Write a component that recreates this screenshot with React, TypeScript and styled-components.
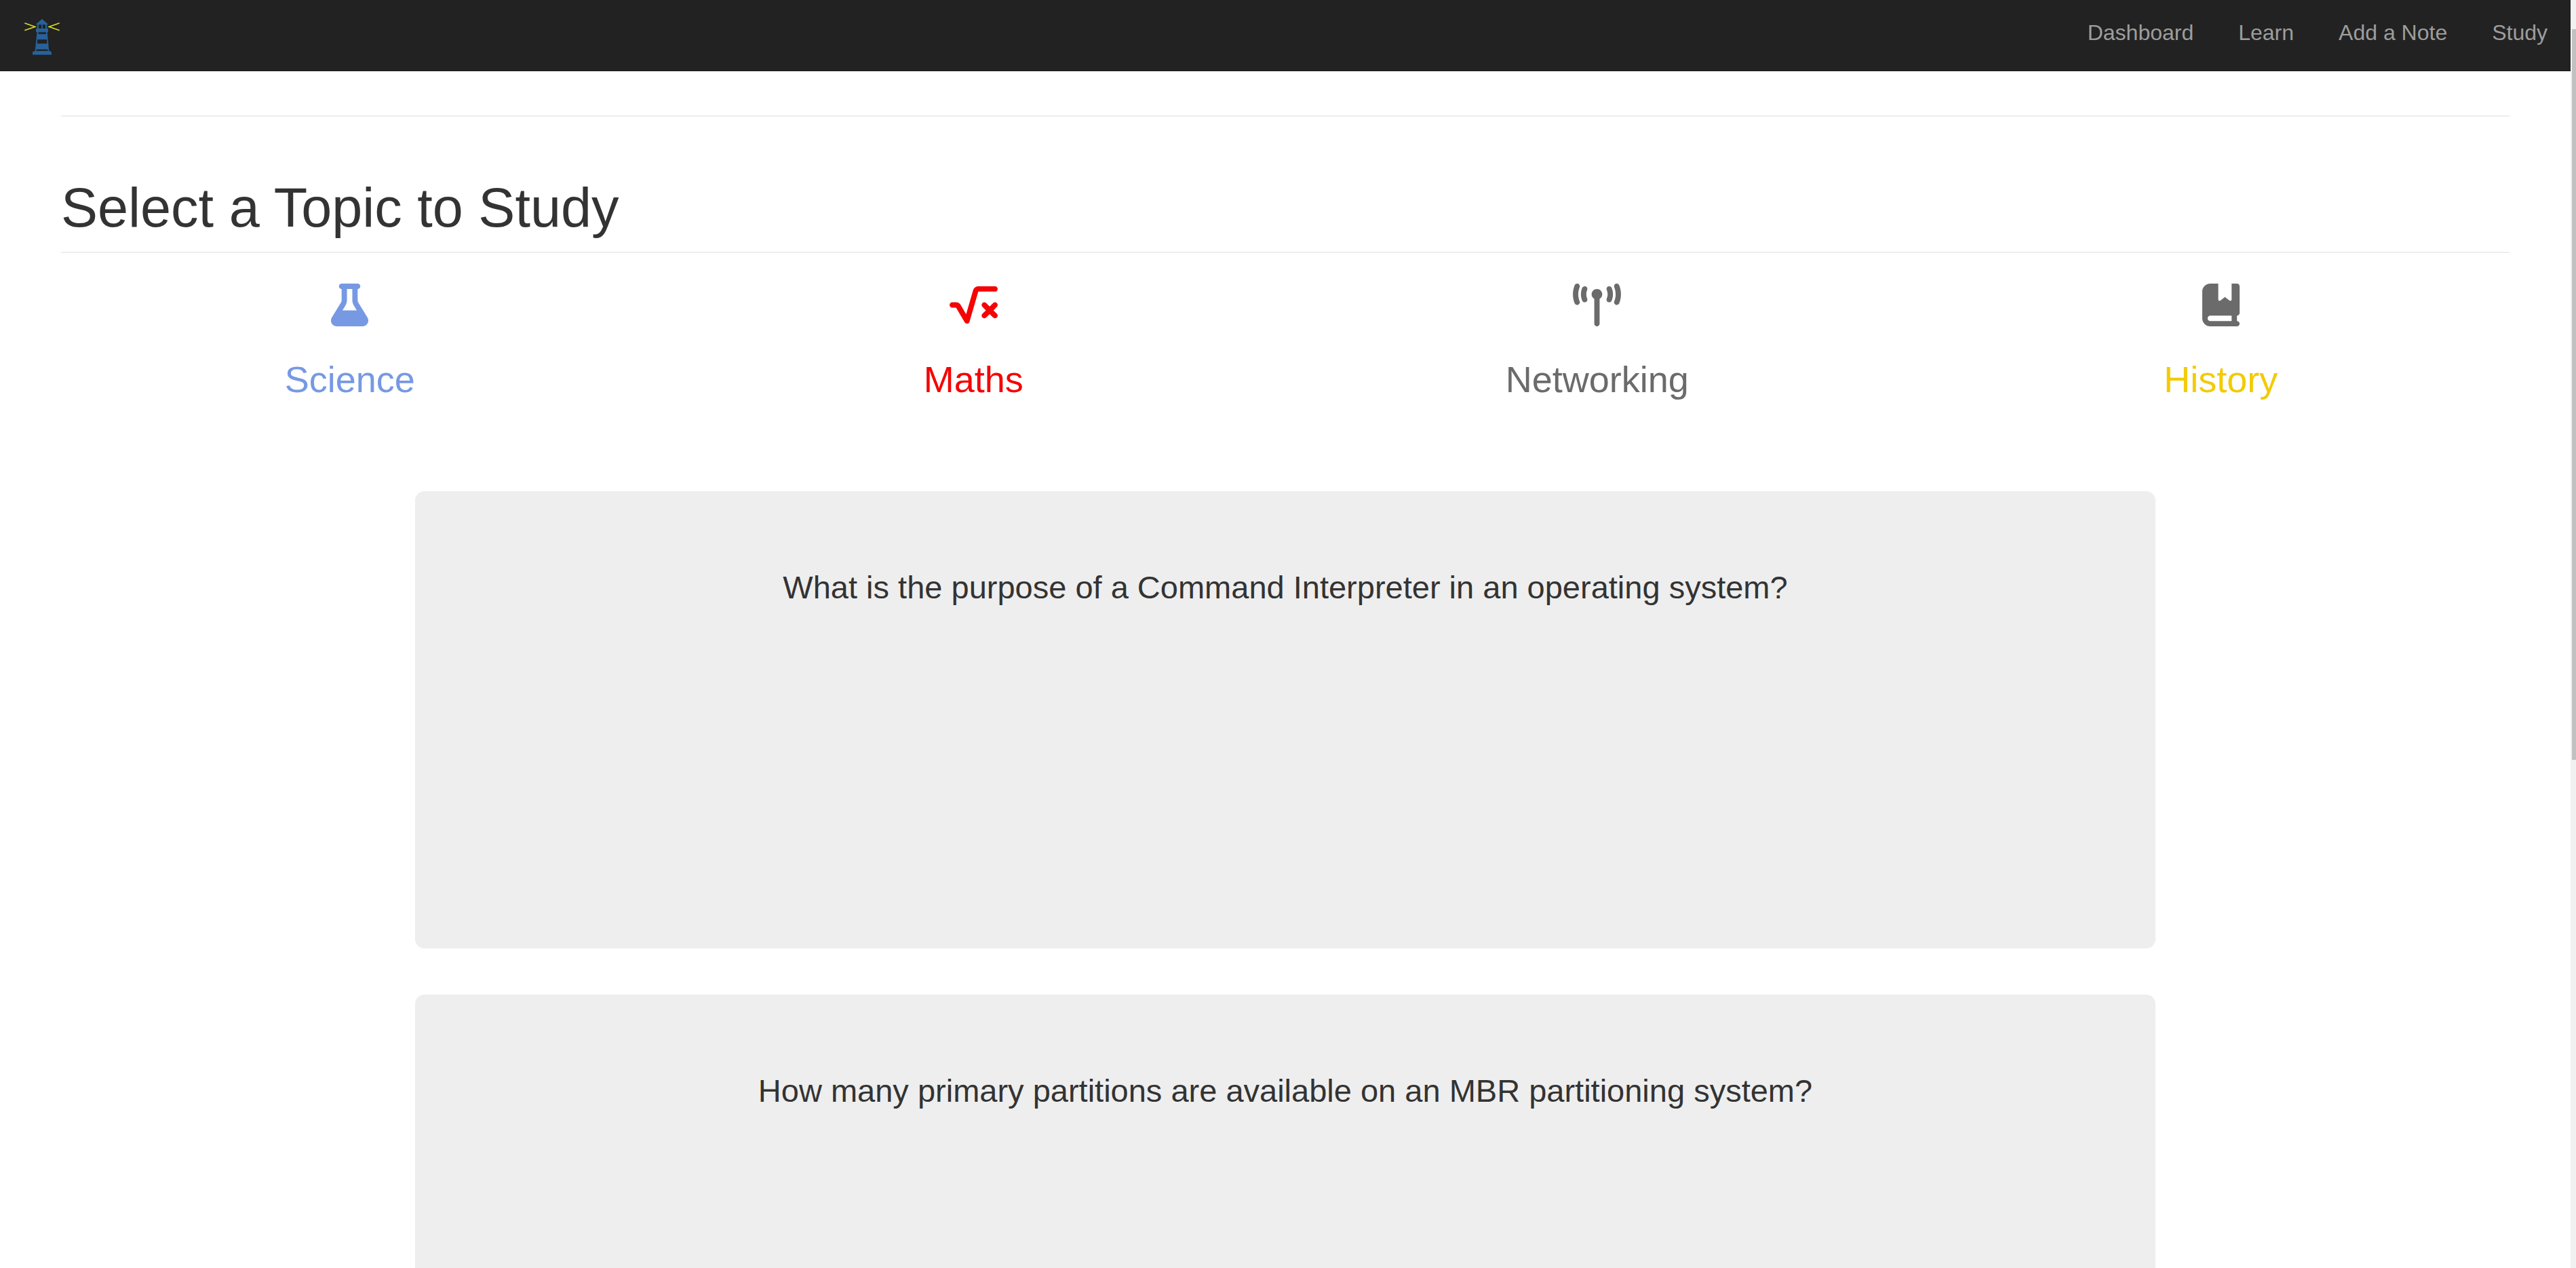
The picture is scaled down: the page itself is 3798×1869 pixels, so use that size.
import React from "react";
import styled, { createGlobalStyle } from "styled-components";
import { FaFlask, FaSquareRootVariable, FaTowerBroadcast, FaBookBookmark } from "react-icons/fa6";

const GlobalStyle = createGlobalStyle`
  *, *::before, *::after { box-sizing: border-box; }
  body {
    margin: 0;
    background: #fff;
    color: #333;
    font-family: "Liberation Sans", Arial, Helvetica, sans-serif;
  }
`;

const Shell = styled.div`
  display: grid;
  grid-template-columns: minmax(0, 1fr) 8px;
  height: 100vh;
  overflow: hidden;
`;

const Page = styled.div`
  min-width: 0;
  overflow: hidden;
`;

const ScrollTrack = styled.div`
  display: flex;
  flex-direction: column;
  padding: 43px 0 0 2px;
  background: #f1f1f1;
`;

const ScrollThumb = styled.div`
  height: 59%;
  background: #c1c1c1;
`;

const Navbar = styled.nav`
  display: flex;
  justify-content: space-between;
  align-items: flex-start;
  height: 105px;
  padding: 26px 34px;
  background: #222;
  border-bottom: 1px solid #1b1b1b;
`;

const Brand = styled.a`
  display: block;
  padding: 2px;
`;

const Logo = styled.svg`
  display: block;
  width: 52px;
  height: 53px;
`;

const NavList = styled.ul`
  display: flex;
  gap: 66px;
  margin: 0;
  padding: 0;
  list-style: none;
`;

const NavLink = styled.a`
  display: block;
  color: #9d9d9d;
  font-size: 32px;
  line-height: 45px;
  text-decoration: none;
`;

const Main = styled.main`
  padding: 65px 90px 0;
`;

const Rule = styled.hr`
  margin: 0;
  border: 0;
  border-top: 2px solid #eee;
`;

const PageHeader = styled.header`
  margin-top: 90px;
  padding-bottom: 20px;
  border-bottom: 2px solid #eee;
`;

const Title = styled.h1`
  margin: 0;
  font-size: 81px;
  font-weight: 400;
  line-height: 89px;
`;

const Topics = styled.div`
  display: grid;
  grid-template-columns: repeat(4, 1fr);
  margin: 45px -34px 0;
`;

const Topic = styled.a<{ $color: string; $iconColor: string }>`
  display: flex;
  flex-direction: column;
  align-items: center;
  gap: 49px;
  color: ${(p) => p.$color};
  text-decoration: none;

  svg {
    display: block;
    width: 71px;
    height: 63px;
    color: ${(p) => p.$iconColor};
  }
`;

const TopicName = styled.span`
  font-size: 54px;
  line-height: 59px;
`;

const Cards = styled.section`
  display: flex;
  flex-direction: column;
  gap: 68px;
  max-width: 2566px;
  margin: 135px auto 0;
`;

const Card = styled.article`
  min-height: 674px;
  padding: 116px 68px;
  border-radius: 14px;
  background: #eee;
  text-align: center;
`;

const Question = styled.p`
  margin: 0;
  font-size: 47px;
  line-height: 52px;
`;

const links = ["Dashboard", "Learn", "Add a Note", "Study"];

const topics = [
  { name: "Science", color: "#7799e3", iconColor: "#7799e3", Icon: FaFlask },
  { name: "Maths", color: "#f40404", iconColor: "#f40404", Icon: FaSquareRootVariable },
  { name: "Networking", color: "#6b6b6b", iconColor: "#6b6b6b", Icon: FaTowerBroadcast },
  { name: "History", color: "#f2cb05", iconColor: "#6b6b6b", Icon: FaBookBookmark },
];

const questions = [
  "What is the purpose of a Command Interpreter in an operating system?",
  "How many primary partitions are available on an MBR partitioning system?",
];

function Lighthouse() {
  return (
    <Logo viewBox="108 83 156 159" aria-hidden="true">
      <g fill="none" stroke="#d9d92e" strokeWidth="5">
        <path d="M109 101L155 117.500L109 133" />
        <path d="M263 101L217 117.500L263 133" />
      </g>
      <g fill="#27629a">
        <path d="M186 83L213 106V108H159V106Z" />
        <path d="M165 107h6v19h-6zM183.500 107h5v19h-5zM201 107h6v19h-6z" />
        <path d="M159 125h54v16h-54z" />
        <path fillRule="evenodd" d="M164 140H209L217 226H155ZM170 141L169 150H204L203 141ZM165 174V192H208V174ZM161 217L160 225H212L211 217Z" />
        <path d="M150 225H222L228 230V241H144V230Z" />
      </g>
    </Logo>
  );
}

export default function App() {
  return (
    <>
      <GlobalStyle />
      <Shell>
        <Page>
          <Navbar>
            <Brand href="#" aria-label="Home">
              <Lighthouse />
            </Brand>
            <NavList>
              {links.map((label) => (
                <li key={label}>
                  <NavLink href="#">{label}</NavLink>
                </li>
              ))}
            </NavList>
          </Navbar>
          <Main>
            <Rule />
            <PageHeader>
              <Title>Select a Topic to Study</Title>
            </PageHeader>
            <Topics>
              {topics.map(({ name, color, iconColor, Icon }) => (
                <Topic key={name} href="#" $color={color} $iconColor={iconColor}>
                  <Icon />
                  <TopicName>{name}</TopicName>
                </Topic>
              ))}
            </Topics>
            <Cards>
              {questions.map((text) => (
                <Card key={text}>
                  <Question>{text}</Question>
                </Card>
              ))}
            </Cards>
          </Main>
        </Page>
        <ScrollTrack aria-hidden="true">
          <ScrollThumb />
        </ScrollTrack>
      </Shell>
    </>
  );
}
